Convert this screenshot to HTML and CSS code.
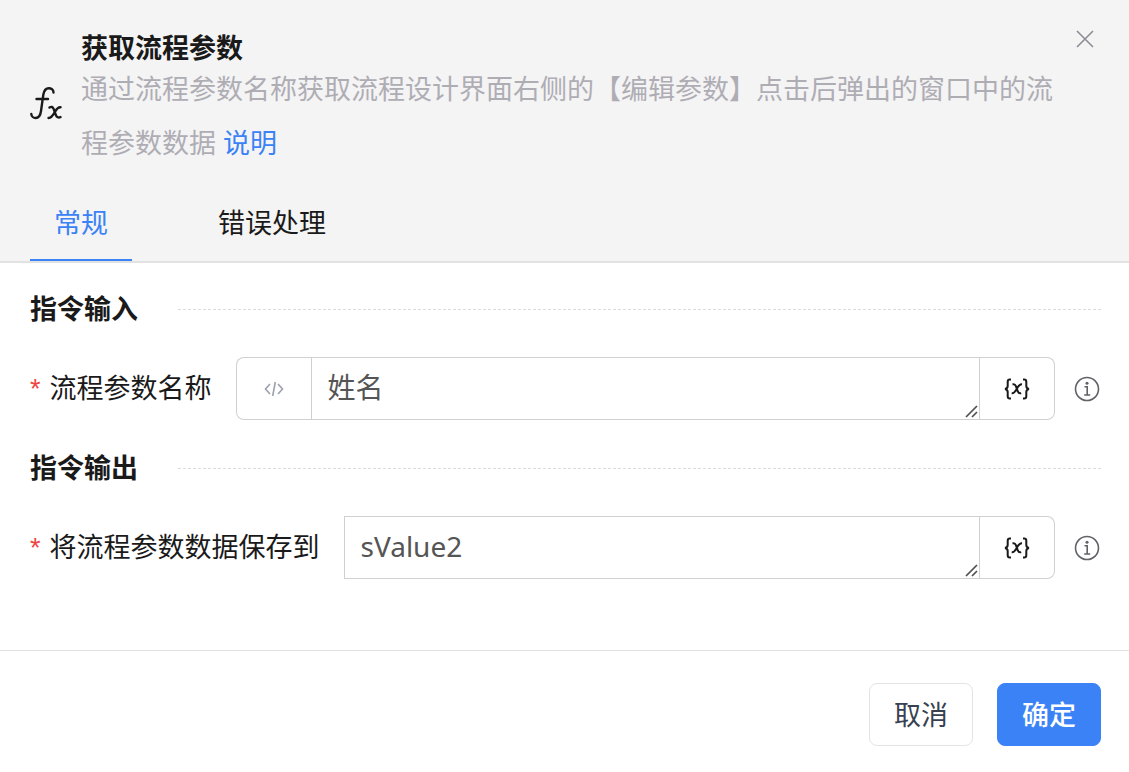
FILE: index.html
```
<!DOCTYPE html>
<html lang="zh-CN">
  <head>
    <meta charset="utf-8">
    <meta name="viewport" content="width=device-width, initial-scale=1">
    <title>获取流程参数</title>
    <link rel="stylesheet" href="styles.css">
  </head>
  <body>
    <header class="dialog-header">
      <div class="intro">
        <svg class="intro-icon" width="32" height="34" viewBox="0 0 32 34" fill="none" stroke="#1a1a1a" stroke-width="2.4" stroke-linecap="round" stroke-linejoin="round">
          <path d="M23.500 5.500c0-3-2.500-4.200-4.700-4.200-3.400 0-4.900 3.200-5.500 6.500L11 24c-.6 4.500-2.500 7-5.300 7-2.200 0-4.300-1.500-4.400-4M6.500 12h11.500"/>
          <path d="M19.500 20.500c1.800-1.200 3.300-.6 4.100 1.400l2.300 6.300c.7 2 2.300 2.800 4.600 1.900M30.500 20.300c-2.700-.4-3.700 1.500-5.300 4.200-1.900 3.400-3.600 6.700-6.700 6.500"/>
        </svg>
        <div class="intro-text">
          <h1>获取流程参数</h1>
          <p>通过流程参数名称获取流程设计界面右侧的【编辑参数】点击后弹出的窗口中的流程参数数据 <a href="#">说明</a></p>
        </div>
        <button class="close" type="button" aria-label="关闭">
          <svg width="18" height="18" viewBox="0 0 18 18" fill="none" stroke="#8b8d92" stroke-width="1.6">
            <path d="M1 1l16 16M17 1L1 17"/>
          </svg>
        </button>
      </div>
      <nav class="tabs">
        <button class="tab is-active" type="button">常规</button>
        <button class="tab" type="button">错误处理</button>
      </nav>
    </header>

    <form class="dialog-form">
      <main class="dialog-body">
        <h2 class="section-title">指令输入</h2>
        <div class="row">
          <label for="param-name"><span class="required">*</span>流程参数名称</label>
          <div class="group">
            <button class="addon" type="button" aria-label="代码">
              <svg width="20" height="16" viewBox="0 0 20 16" fill="none" stroke="#9ba1ad" stroke-width="1.6">
                <path d="M6 3L1.500 8 6 13M14 3l4.500 5-4.500 5M11.300 1L8.700 15"/>
              </svg>
            </button>
            <div class="field">
              <textarea id="param-name" rows="1">姓名</textarea>
              <svg class="grip" width="13" height="13" viewBox="0 0 13 13" fill="none" stroke="#505050" stroke-width="1.700">
                <path d="M1 12L12 1M7 12l5-5"/>
              </svg>
            </div>
            <button class="addon" type="button" aria-label="变量">
              <svg width="26" height="22" viewBox="0 0 26 22" fill="none" stroke="#1a1a1a" stroke-width="2">
                <path d="M7 1.500H5.800C4.300 1.500 3.700 2.300 3.700 3.700V8c0 1.500-.7 2.700-2.700 3 2 .3 2.700 1.500 2.700 3v4.300c0 1.400.6 2.200 2.100 2.200H7"/>
                <path d="M19 1.500h1.200c1.500 0 2.100.8 2.100 2.200V8c0 1.500.7 2.700 2.700 3-2 .3-2.700 1.500-2.700 3v4.300c0 1.400-.6 2.200-2.100 2.200H19"/>
                <path d="M8.500 6.500c1.800-.6 2.800.2 3.400 1.700l1.900 5.200c.6 1.700 1.600 2.300 3.400 1.800M18 6.300c-2-.2-3 .8-4.300 3l-1.600 2.700c-1.300 2.300-2.200 3.400-4.400 3.200"/>
              </svg>
            </button>
          </div>
          <button class="info" type="button" aria-label="提示">
            <svg width="26" height="26" viewBox="0 0 26 26" fill="none" stroke="#606266" stroke-width="1.600">
              <circle cx="13" cy="13" r="11.500"/>
              <path d="M10.500 10.800h2.700V19M10.200 19h6"/>
              <circle cx="13" cy="7.300" r="1.500" fill="#606266" stroke="none"/>
            </svg>
          </button>
        </div>

        <h2 class="section-title">指令输出</h2>
        <div class="row">
          <label for="save-to"><span class="required">*</span>将流程参数数据保存到</label>
          <div class="group">
            <div class="field">
              <textarea id="save-to" rows="1" spellcheck="false">sValue2</textarea>
              <svg class="grip" width="13" height="13" viewBox="0 0 13 13" fill="none" stroke="#505050" stroke-width="1.700">
                <path d="M1 12L12 1M7 12l5-5"/>
              </svg>
            </div>
            <button class="addon" type="button" aria-label="变量">
              <svg width="26" height="22" viewBox="0 0 26 22" fill="none" stroke="#1a1a1a" stroke-width="2">
                <path d="M7 1.500H5.800C4.300 1.500 3.700 2.300 3.700 3.700V8c0 1.500-.7 2.700-2.700 3 2 .3 2.700 1.500 2.700 3v4.300c0 1.400.6 2.200 2.100 2.200H7"/>
                <path d="M19 1.500h1.200c1.500 0 2.100.8 2.100 2.200V8c0 1.500.7 2.700 2.700 3-2 .3-2.700 1.500-2.700 3v4.300c0 1.400-.6 2.200-2.100 2.200H19"/>
                <path d="M8.500 6.500c1.800-.6 2.800.2 3.400 1.700l1.900 5.200c.6 1.700 1.600 2.300 3.400 1.800M18 6.300c-2-.2-3 .8-4.300 3l-1.600 2.700c-1.300 2.300-2.200 3.400-4.400 3.200"/>
              </svg>
            </button>
          </div>
          <button class="info" type="button" aria-label="提示">
            <svg width="26" height="26" viewBox="0 0 26 26" fill="none" stroke="#606266" stroke-width="1.600">
              <circle cx="13" cy="13" r="11.500"/>
              <path d="M10.500 10.800h2.700V19M10.200 19h6"/>
              <circle cx="13" cy="7.300" r="1.500" fill="#606266" stroke="none"/>
            </svg>
          </button>
        </div>
      </main>

      <footer class="dialog-footer">
        <button class="btn" type="button">取消</button>
        <button class="btn btn-primary" type="submit">确定</button>
      </footer>
    </form>
  </body>
</html>
```

FILE: styles.css
```
* {
  box-sizing: border-box;
}

body {
  margin: 0;
  background: #fff;
  color: #1a1a1a;
  font-family: "Noto Sans", "Noto Sans CJK SC", sans-serif;
  font-size: 27px;
  line-height: 40px;
}

button,
textarea {
  margin: 0;
  padding: 0;
  border: 0;
  background: none;
  color: inherit;
  font: inherit;
}

button {
  cursor: pointer;
}

svg {
  display: block;
}

h1,
h2,
p {
  margin: 0;
  font-size: 27px;
}

a {
  color: #3b82f6;
  text-decoration: none;
}

/* header */
.dialog-header {
  padding: 30px 28px 0 30px;
  background: #f4f4f4;
  border-bottom: 2px solid #e2e2e2;
}

.intro {
  display: flex;
  align-items: flex-start;
}

.intro-icon {
  flex: none;
  align-self: center;
  margin-top: 8px;
  margin-right: 19px;
}

.intro-text {
  flex: 1;
}

.intro-text h1 {
  padding-top: 4px;
  line-height: 28px;
}

.intro-text p {
  color: #afadb4;
  line-height: 54px;
}

.close {
  flex: none;
  margin-left: 10px;
  padding: 0 7px;
}

.tabs {
  display: flex;
  gap: 62px;
  margin-top: 17px;
}

.tab {
  padding: 16px 24px;
  border-bottom: 2px solid transparent;
}

.tab.is-active {
  border-color: #3b82f6;
  color: #3b82f6;
}

/* form */
.dialog-body {
  padding: 26px 28px 71px 30px;
}

.section-title {
  display: flex;
  align-items: center;
  gap: 40px;
  margin-bottom: 28px;
}

.section-title::after {
  content: "";
  flex: 1;
  border-top: 1px dashed #dcdcde;
}

.row {
  display: flex;
  align-items: center;
}

.row + .section-title {
  margin-top: 28px;
}

.row label {
  flex: none;
  margin-right: 24px;
}

.required {
  margin-right: 9px;
  color: #f04444;
  font-family: "Liberation Sans", sans-serif;
}

.group {
  display: flex;
  flex: 1;
  height: 63px;
}

.addon {
  display: flex;
  flex: none;
  align-items: center;
  justify-content: center;
  width: 75px;
  border: 1px solid #d0d0d0;
}

.addon:first-child {
  border-right: 0;
  border-radius: 8px 0 0 8px;
}

.addon:last-child {
  border-left: 0;
  border-radius: 0 8px 8px 0;
}

.field {
  position: relative;
  flex: 1;
}

.field textarea {
  display: block;
  width: 100%;
  height: 100%;
  padding: 9px 16px;
  border: 1px solid #d0d0d0;
  color: #555;
  font-size: 28px;
  overflow: hidden;
  resize: none;
}

.grip {
  position: absolute;
  right: 2px;
  bottom: 2px;
}

.info {
  flex: none;
  margin-left: 19px;
  padding-right: 1px;
}

/* footer */
.dialog-footer {
  display: flex;
  justify-content: flex-end;
  gap: 24px;
  padding: 32px 28px 26px;
  border-top: 1px solid #e2e2e2;
}

.btn {
  padding: 11px 24px;
  border: 1px solid #e2e4e8;
  border-radius: 8px;
  color: #374151;
  line-height: 39px;
}

.btn-primary {
  border-color: #3b82f6;
  background: #3b82f6;
  color: #fff;
  font-weight: 500;
}
```
